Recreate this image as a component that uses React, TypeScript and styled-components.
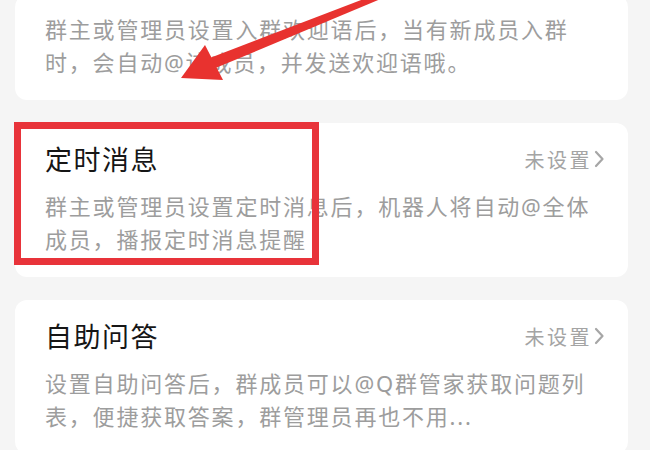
import React from "react";
import styled, { createGlobalStyle } from "styled-components";

const GlobalStyle = createGlobalStyle`
  html, body {
    margin: 0;
    padding: 0;
    background: #f5f5f5;
  }
  body {
    font-family: "Noto Sans", "Noto Sans CJK SC", sans-serif;
  }
`;

const Screen = styled.div`
  position: relative;
  width: 650px;
  height: 450px;
  overflow: hidden;
  background: #f5f5f5;
`;

// scrolled list: first card is partly above the viewport
const List = styled.div`
  display: flex;
  flex-direction: column;
  gap: 23px;
  margin-top: -5px;
  padding: 0 22px 0 15px;
`;

const Card = styled.div`
  position: relative;
  background: #ffffff;
  border-radius: 12px;
  padding: 18px 23px 21px 30px;
`;

const Header = styled.div`
  display: flex;
  align-items: center;
  justify-content: space-between;
  height: 36px;
  margin-bottom: 13px;
`;

const Title = styled.div`
  font-family: "Noto Sans CJK SC", sans-serif;
  font-size: 27px;
  line-height: 36px;
  letter-spacing: 1.5px;
  color: #161616;
`;

const Status = styled.div`
  display: flex;
  align-items: center;
  gap: 1px;
  font-family: "Noto Sans CJK SC", sans-serif;
  font-size: 20px;
  letter-spacing: 2.5px;
  color: #a4a4a4;
`;

const Desc = styled.div`
  font-size: 22px;
  line-height: 33px;
  letter-spacing: 1.8px;
  color: #9d9d9d;
  white-space: nowrap;
`;

const Highlight = styled.div`
  position: absolute;
  left: -1px;
  top: -1px;
  width: 305px;
  height: 143px;
  box-sizing: border-box;
  border: 7px solid #e8333a;
  pointer-events: none;
`;

const ArrowLayer = styled.svg`
  position: absolute;
  left: 0;
  top: 0;
  pointer-events: none;
`;

function Chevron() {
  return (
    <svg width="12" height="18" viewBox="0 0 12 18">
      <polyline
        points="3,2 9.5,9 3,16"
        fill="none"
        stroke="#a6a6a6"
        strokeWidth="2.2"
        strokeLinecap="round"
        strokeLinejoin="round"
      />
    </svg>
  );
}

type Item = {
  title?: string;
  status?: string;
  lines: string[];
  marked?: boolean;
};

const items: Item[] = [
  {
    lines: ["群主或管理员设置入群欢迎语后，当有新成员入群", "时，会自动@该成员，并发送欢迎语哦。"],
  },
  {
    title: "定时消息",
    status: "未设置",
    lines: ["群主或管理员设置定时消息后，机器人将自动@全体", "成员，播报定时消息提醒"],
    marked: true,
  },
  {
    title: "自助问答",
    status: "未设置",
    lines: ["设置自助问答后，群成员可以@Q群管家获取问题列", "表，便捷获取答案，群管理员再也不用..."],
  },
];

export default function App() {
  return (
    <Screen>
      <GlobalStyle />
      <List>
        {items.map((item) => (
          <Card key={item.lines[0]}>
            {item.title && (
              <Header>
                <Title>{item.title}</Title>
                <Status>
                  {item.status}
                  <Chevron />
                </Status>
              </Header>
            )}
            <Desc>
              {item.lines.map((line) => (
                <div key={line}>{line}</div>
              ))}
            </Desc>
            {item.marked && <Highlight />}
          </Card>
        ))}
      </List>
      <ArrowLayer width="650" height="450" viewBox="0 0 650 450">
        <polygon points="209.8,57.9 378.9,-6.8 381.1,-1.2 214.3,68.6" fill="#e8322f" />
        <polygon points="181,78 205,45 223,80" fill="#e8322f" />
      </ArrowLayer>
    </Screen>
  );
}
